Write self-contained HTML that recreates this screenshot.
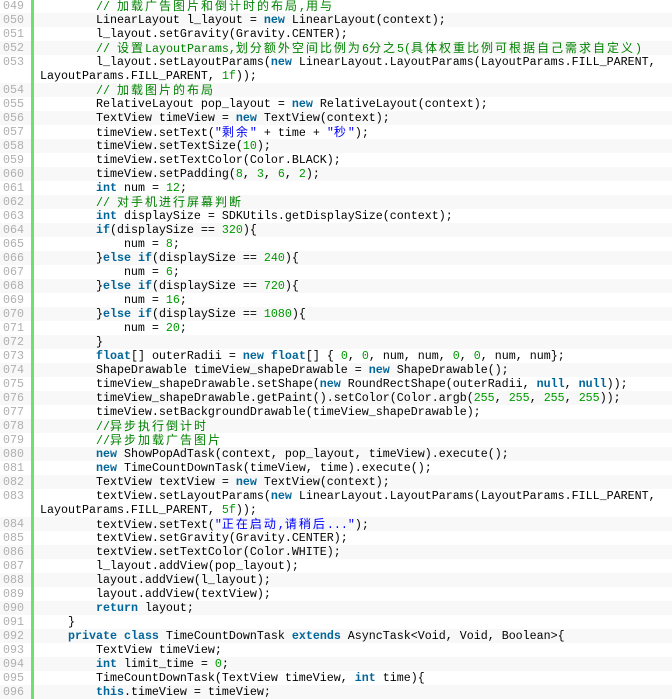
<!DOCTYPE html>
<html><head><meta charset="utf-8"><style>
html,body{margin:0;padding:0;background:#fff;width:672px;height:699px;overflow:hidden}
#w{margin-top:-1px}
.r{display:flex;height:14px;line-height:14px;font-family:"Liberation Mono","Noto Sans CJK SC",monospace;font-size:11.67px;color:#000;white-space:pre}
.r.a{background:#f8f8f8}
.n{width:31px;padding-left:3px;box-sizing:border-box;color:#afafaf;flex:none}
.b{width:3px;background:#6ce26c;flex:none}
.c{padding-left:6px}
.k{color:#006699;font-weight:bold}
.s{color:#0000ff}
.m{color:#008200}
.d{color:#009900}
.z{font-family:"Noto Sans CJK SC",sans-serif;font-size:12px;letter-spacing:2px}
</style></head><body><div id="w">
<div class="r"><span class="n">049</span><span class="b"></span><span class="c">        <span class="m">// <span class="z">加载广告图片和倒计时的布局</span>,<span class="z">用与</span></span></span></div>
<div class="r a"><span class="n">050</span><span class="b"></span><span class="c">        LinearLayout l_layout = <span class="k">new</span> LinearLayout(context);</span></div>
<div class="r"><span class="n">051</span><span class="b"></span><span class="c">        l_layout.setGravity(Gravity.CENTER);</span></div>
<div class="r a"><span class="n">052</span><span class="b"></span><span class="c">        <span class="m">// <span class="z">设置</span>LayoutParams,<span class="z">划分额外空间比例为</span>6<span class="z">分之</span>5(<span class="z">具体权重比例可根据自己需求自定义</span>)</span></span></div>
<div class="r"><span class="n">053</span><span class="b"></span><span class="c">        l_layout.setLayoutParams(<span class="k">new</span> LinearLayout.LayoutParams(LayoutParams.FILL_PARENT,</span></div>
<div class="r"><span class="n"> </span><span class="b"></span><span class="c">LayoutParams.FILL_PARENT, <span class="d">1f</span>));</span></div>
<div class="r a"><span class="n">054</span><span class="b"></span><span class="c">        <span class="m">// <span class="z">加载图片的布局</span></span></span></div>
<div class="r"><span class="n">055</span><span class="b"></span><span class="c">        RelativeLayout pop_layout = <span class="k">new</span> RelativeLayout(context);</span></div>
<div class="r a"><span class="n">056</span><span class="b"></span><span class="c">        TextView timeView = <span class="k">new</span> TextView(context);</span></div>
<div class="r"><span class="n">057</span><span class="b"></span><span class="c">        timeView.setText(<span class="s">"<span class="z">剩余</span>"</span> + time + <span class="s">"<span class="z">秒</span>"</span>);</span></div>
<div class="r a"><span class="n">058</span><span class="b"></span><span class="c">        timeView.setTextSize(<span class="d">10</span>);</span></div>
<div class="r"><span class="n">059</span><span class="b"></span><span class="c">        timeView.setTextColor(Color.BLACK);</span></div>
<div class="r a"><span class="n">060</span><span class="b"></span><span class="c">        timeView.setPadding(<span class="d">8</span>, <span class="d">3</span>, <span class="d">6</span>, <span class="d">2</span>);</span></div>
<div class="r"><span class="n">061</span><span class="b"></span><span class="c">        <span class="k">int</span> num = <span class="d">12</span>;</span></div>
<div class="r a"><span class="n">062</span><span class="b"></span><span class="c">        <span class="m">// <span class="z">对手机进行屏幕判断</span></span></span></div>
<div class="r"><span class="n">063</span><span class="b"></span><span class="c">        <span class="k">int</span> displaySize = SDKUtils.getDisplaySize(context);</span></div>
<div class="r a"><span class="n">064</span><span class="b"></span><span class="c">        <span class="k">if</span>(displaySize == <span class="d">320</span>){</span></div>
<div class="r"><span class="n">065</span><span class="b"></span><span class="c">            num = <span class="d">8</span>;</span></div>
<div class="r a"><span class="n">066</span><span class="b"></span><span class="c">        }<span class="k">else</span> <span class="k">if</span>(displaySize == <span class="d">240</span>){</span></div>
<div class="r"><span class="n">067</span><span class="b"></span><span class="c">            num = <span class="d">6</span>;</span></div>
<div class="r a"><span class="n">068</span><span class="b"></span><span class="c">        }<span class="k">else</span> <span class="k">if</span>(displaySize == <span class="d">720</span>){</span></div>
<div class="r"><span class="n">069</span><span class="b"></span><span class="c">            num = <span class="d">16</span>;</span></div>
<div class="r a"><span class="n">070</span><span class="b"></span><span class="c">        }<span class="k">else</span> <span class="k">if</span>(displaySize == <span class="d">1080</span>){</span></div>
<div class="r"><span class="n">071</span><span class="b"></span><span class="c">            num = <span class="d">20</span>;</span></div>
<div class="r a"><span class="n">072</span><span class="b"></span><span class="c">        }</span></div>
<div class="r"><span class="n">073</span><span class="b"></span><span class="c">        <span class="k">float</span>[] outerRadii = <span class="k">new</span> <span class="k">float</span>[] { <span class="d">0</span>, <span class="d">0</span>, num, num, <span class="d">0</span>, <span class="d">0</span>, num, num};</span></div>
<div class="r a"><span class="n">074</span><span class="b"></span><span class="c">        ShapeDrawable timeView_shapeDrawable = <span class="k">new</span> ShapeDrawable();</span></div>
<div class="r"><span class="n">075</span><span class="b"></span><span class="c">        timeView_shapeDrawable.setShape(<span class="k">new</span> RoundRectShape(outerRadii, <span class="k">null</span>, <span class="k">null</span>));</span></div>
<div class="r a"><span class="n">076</span><span class="b"></span><span class="c">        timeView_shapeDrawable.getPaint().setColor(Color.argb(<span class="d">255</span>, <span class="d">255</span>, <span class="d">255</span>, <span class="d">255</span>));</span></div>
<div class="r"><span class="n">077</span><span class="b"></span><span class="c">        timeView.setBackgroundDrawable(timeView_shapeDrawable);</span></div>
<div class="r a"><span class="n">078</span><span class="b"></span><span class="c">        <span class="m">//<span class="z">异步执行倒计时</span></span></span></div>
<div class="r"><span class="n">079</span><span class="b"></span><span class="c">        <span class="m">//<span class="z">异步加载广告图片</span></span></span></div>
<div class="r a"><span class="n">080</span><span class="b"></span><span class="c">        <span class="k">new</span> ShowPopAdTask(context, pop_layout, timeView).execute();</span></div>
<div class="r"><span class="n">081</span><span class="b"></span><span class="c">        <span class="k">new</span> TimeCountDownTask(timeView, time).execute();</span></div>
<div class="r a"><span class="n">082</span><span class="b"></span><span class="c">        TextView textView = <span class="k">new</span> TextView(context);</span></div>
<div class="r"><span class="n">083</span><span class="b"></span><span class="c">        textView.setLayoutParams(<span class="k">new</span> LinearLayout.LayoutParams(LayoutParams.FILL_PARENT,</span></div>
<div class="r"><span class="n"> </span><span class="b"></span><span class="c">LayoutParams.FILL_PARENT, <span class="d">5f</span>));</span></div>
<div class="r a"><span class="n">084</span><span class="b"></span><span class="c">        textView.setText(<span class="s">"<span class="z">正在启动</span>,<span class="z">请稍后</span>..."</span>);</span></div>
<div class="r"><span class="n">085</span><span class="b"></span><span class="c">        textView.setGravity(Gravity.CENTER);</span></div>
<div class="r a"><span class="n">086</span><span class="b"></span><span class="c">        textView.setTextColor(Color.WHITE);</span></div>
<div class="r"><span class="n">087</span><span class="b"></span><span class="c">        l_layout.addView(pop_layout);</span></div>
<div class="r a"><span class="n">088</span><span class="b"></span><span class="c">        layout.addView(l_layout);</span></div>
<div class="r"><span class="n">089</span><span class="b"></span><span class="c">        layout.addView(textView);</span></div>
<div class="r a"><span class="n">090</span><span class="b"></span><span class="c">        <span class="k">return</span> layout;</span></div>
<div class="r"><span class="n">091</span><span class="b"></span><span class="c">    }</span></div>
<div class="r a"><span class="n">092</span><span class="b"></span><span class="c">    <span class="k">private</span> <span class="k">class</span> TimeCountDownTask <span class="k">extends</span> AsyncTask&lt;Void, Void, Boolean&gt;{</span></div>
<div class="r"><span class="n">093</span><span class="b"></span><span class="c">        TextView timeView;</span></div>
<div class="r a"><span class="n">094</span><span class="b"></span><span class="c">        <span class="k">int</span> limit_time = <span class="d">0</span>;</span></div>
<div class="r"><span class="n">095</span><span class="b"></span><span class="c">        TimeCountDownTask(TextView timeView, <span class="k">int</span> time){</span></div>
<div class="r a"><span class="n">096</span><span class="b"></span><span class="c">        <span class="k">this</span>.timeView = timeView;</span></div>
</div></body></html>
